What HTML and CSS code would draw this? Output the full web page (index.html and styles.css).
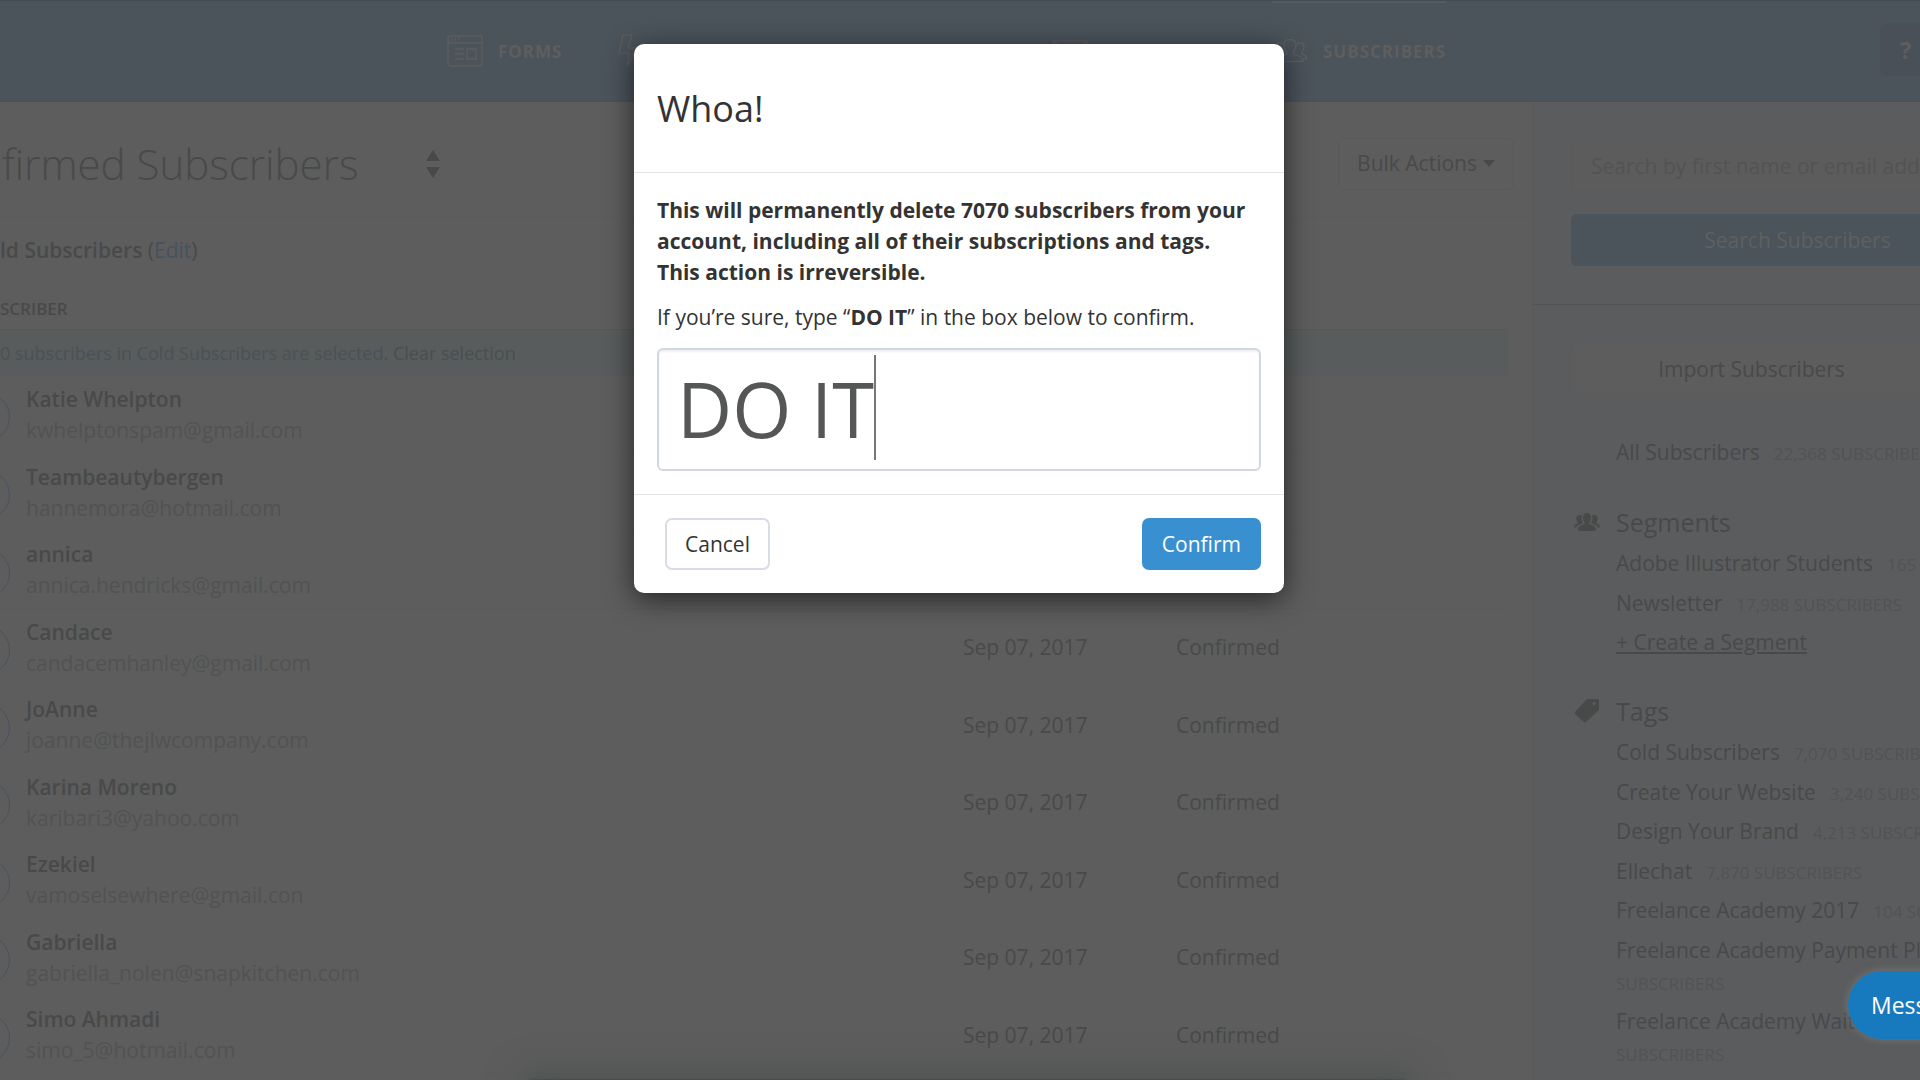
FILE: index.html
```html
<!DOCTYPE html>
<html lang="en">
<head>
    <meta charset="UTF-8">
    <meta name="viewport" content="width=device-width, initial-scale=1.0">
    <title>Confirmed Subscribers</title>
    <link rel="stylesheet" href="styles.css">
</head>
<body>
    <header class="topbar">
        <nav class="nav">
            <a href="#" class="nav-link">
                <svg width="36" height="32" viewBox="0 0 36 32" fill="none" stroke="currentColor" stroke-width="1.3">
                    <rect x="1" y="1" width="34" height="30" rx="2"/>
                    <path d="M1 8h34M8 14h9M8 19h9M8 24h9M20 14h9v10h-9z"/>
                    <path d="M4 4.500h1.500M7.500 4.500h1.500M11 4.500h1.500" stroke-width="2"/>
                </svg>
                <span>FORMS</span>
            </a>
            <a href="#" class="nav-link" aria-label="Automations">
                <svg width="22" height="34" viewBox="0 0 22 34" fill="none" stroke="currentColor" stroke-width="1.2">
                    <path d="M5 1h9l-4 13h9L9 32l2-13H1z"/>
                </svg>
            </a>
            <a href="#" class="nav-link" aria-label="Broadcasts">
                <svg width="36" height="22" viewBox="0 0 36 22" fill="none" stroke="currentColor" stroke-width="1.2">
                    <path d="M1 1h34v20H1zM1 1l17 12L35 1"/>
                </svg>
            </a>
            <a href="#" class="nav-link active">
                <svg width="36" height="24" viewBox="0 0 36 24" fill="none" stroke="currentColor" stroke-width="1.3">
                    <path d="M5 22.500h26c0-3-1-4-3-5l-6-2c-1-1-1-2 0-3 1-2 2-4 2-7 0-3-2-5-6-5s-6 2-6 5c0 3 1 5 2 7 1 1 1 2 0 3l-6 2c-2 1-3 2-3 5z"/>
                    <path d="M25 5c1-2 7-2 7 3 0 2-1 4-2 5v2c1 1 5 1 5 4v1h-4M11 5c-1-2-7-2-7 3 0 2 1 4 2 5v2c-1 1-5 1-5 4v1h4"/>
                </svg>
                <span>SUBSCRIBERS</span>
            </a>
        </nav>
        <button class="help">?</button>
    </header>

    <div class="page">
        <main class="content">
            <div class="title-row">
                <h1>firmed Subscribers</h1>
                <svg class="sort" width="14" height="28" viewBox="0 0 14 28" fill="currentColor"><path d="M7 0l7 11H0zM7 28l7-11H0z"/></svg>
                <button class="bulk">Bulk Actions <svg width="12" height="7" viewBox="0 0 12 7" fill="currentColor"><path d="M0 0h12L6 7z"/></svg></button>
            </div>
            <p class="filter"><b>ld Subscribers</b> (<a href="#">Edit</a>)</p>
            <table class="subscribers">
                <thead>
                    <tr><th>SCRIBER</th><th></th><th></th></tr>
                    <tr class="selected"><td colspan="3">0 subscribers in Cold Subscribers are selected. <a href="#">Clear selection</a></td></tr>
                </thead>
                <tbody>
                    <tr><td class="person"><b>Katie Whelpton</b><span>kwhelptonspam@gmail.com</span></td><td></td><td></td></tr>
                    <tr><td class="person"><b>Teambeautybergen</b><span>hannemora@hotmail.com</span></td><td></td><td></td></tr>
                    <tr><td class="person"><b>annica</b><span>annica.hendricks@gmail.com</span></td><td></td><td></td></tr>
                    <tr><td class="person"><b>Candace</b><span>candacemhanley@gmail.com</span></td><td>Sep 07, 2017</td><td>Confirmed</td></tr>
                    <tr><td class="person"><b>JoAnne</b><span>joanne@thejlwcompany.com</span></td><td>Sep 07, 2017</td><td>Confirmed</td></tr>
                    <tr><td class="person"><b>Karina Moreno</b><span>karibari3@yahoo.com</span></td><td>Sep 07, 2017</td><td>Confirmed</td></tr>
                    <tr><td class="person"><b>Ezekiel</b><span>vamoselsewhere@gmail.con</span></td><td>Sep 07, 2017</td><td>Confirmed</td></tr>
                    <tr><td class="person"><b>Gabriella</b><span>gabriella_nolen@snapkitchen.com</span></td><td>Sep 07, 2017</td><td>Confirmed</td></tr>
                    <tr><td class="person"><b>Simo Ahmadi</b><span>simo_5@hotmail.com</span></td><td>Sep 07, 2017</td><td>Confirmed</td></tr>
                </tbody>
            </table>
        </main>

        <aside class="sidebar">
            <form class="search">
                <input type="text" aria-label="Search subscribers" placeholder="Search by first name or email address">
                <button type="button">Search Subscribers</button>
            </form>
            <div class="lists">
                <button class="import">Import Subscribers</button>
                <ul class="all">
                    <li><a href="#">All Subscribers</a><small>22,368 SUBSCRIBERS</small></li>
                </ul>
                <h2>
                    <svg width="26" height="18" viewBox="0 0 26 18" fill="currentColor">
                        <path d="M13 0c3 0 4 2 4 5 0 2-1 4-2 5 0 2 7 2 7 6 0 1-1 2-2 2H6c-1 0-2-1-2-2 0-4 7-4 7-6-1-1-2-3-2-5 0-3 1-5 4-5z"/>
                        <path d="M6 2c1 0 2 0 2 1-1 4 0 5 1 7-2 2-6 1-7 5-3 0-2-4 2-5-2-3-3-8 2-8zM20 2c-1 0-2 0-2 1 1 4 0 5-1 7 2 2 6 1 7 5 3 0 2-4-2-5 2-3 3-8-2-8z"/>
                    </svg>
                    Segments
                </h2>
                <ul>
                    <li><a href="#">Adobe Illustrator Students</a><small>165 SUBSCRIBERS</small></li>
                    <li><a href="#">Newsletter</a><small>17,988 SUBSCRIBERS</small></li>
                    <li><a href="#" class="create">+ Create a Segment</a></li>
                </ul>
                <h2 class="tags-title">
                    <svg width="26" height="26" viewBox="0 0 26 26" fill="currentColor">
                        <path fill-rule="evenodd" d="M14 1h10q1 0 1 1v9q0 1-1 2L12 24q-1 1-2 0L1 16q-1-1 0-2L12 2q1-1 2-1zM20 4a1.500 1.500 0 1 0 .1 0z"/>
                    </svg>
                    Tags
                </h2>
                <ul>
                    <li><a href="#">Cold Subscribers</a><small>7,070 SUBSCRIBERS</small></li>
                    <li><a href="#">Create Your Website</a><small>3,240 SUBSCRIBERS</small></li>
                    <li><a href="#">Design Your Brand</a><small>4,213 SUBSCRIBERS</small></li>
                    <li><a href="#">Ellechat</a><small>7,870 SUBSCRIBERS</small></li>
                    <li><a href="#">Freelance Academy 2017</a><small>104 SUBSCRIBERS</small></li>
                    <li><a href="#">Freelance Academy Payment Plan</a><br><small>SUBSCRIBERS</small></li>
                    <li><a href="#">Freelance Academy Waitlist</a><br><small>SUBSCRIBERS</small></li>
                </ul>
            </div>
        </aside>
    </div>

    <div class="drawer"></div>
    <button class="messages">Messages</button>

    <div class="overlay">
        <div class="modal" role="dialog" aria-labelledby="modal-title">
            <div class="modal-header">
                <h3 id="modal-title">Whoa!</h3>
            </div>
            <div class="modal-body">
                <p><b>This will permanently delete 7070 subscribers from your account, including all of their subscriptions and tags. This action is irreversible.</b></p>
                <label for="confirm-text">If you’re sure, type “<b>DO IT</b>” in the box below to confirm.</label>
                <div class="confirm-field">
                    <input type="text" id="confirm-text" value="DO IT">
                    <span class="caret"></span>
                </div>
            </div>
            <div class="modal-footer">
                <button class="btn">Cancel</button>
                <button class="btn btn-primary">Confirm</button>
            </div>
        </div>
    </div>
</body>
</html>
```
FILE: styles.css
```css
:root {
    --page: #5d5d5d;
    --bar: #4b535b;
    --side: #5b5c5e;
    --text: #484a49;
    --muted: #515353;
    --line: #5a5b5b;
}
* {
    box-sizing: border-box;
}
body {
    margin: 0;
    height: 100vh;
    overflow: hidden;
    display: flex;
    flex-direction: column;
    background: var(--page);
    color: var(--text);
    font-family: "Open Sans", "Noto Sans", sans-serif;
    font-size: 21px;
    line-height: 31px;
}
button, input {
    font: inherit;
    color: inherit;
}
a {
    color: inherit;
    text-decoration: none;
}
b {
    font-weight: 600;
}
h1, h2, h3, p, ul {
    margin: 0;
    padding: 0;
    font-weight: 400;
}
.topbar {
    flex: none;
    display: flex;
    justify-content: space-between;
    height: 102px;
    background: var(--bar);
    border-top: 1px solid #454c54;
    border-bottom: 1px solid #48525d;
    color: #5e5e5f;
}
.nav {
    display: grid;
    grid-template-columns: 171px 434px 220px auto;
    padding-left: 447px;
}
.nav-link {
    display: flex;
    align-items: center;
    gap: 15px;
    font-size: 17px;
    font-weight: 700;
    letter-spacing: 1px;
}
.nav-link.active {
    box-shadow: inset 0 2px #535b62;
}
.help {
    flex: none;
    width: 64px;
    height: 53px;
    margin: 22px -24px 0 0;
    padding: 0 0 0 20px;
    border: 0;
    border-radius: 8px;
    background: #495057;
    font-size: 24px;
    font-weight: 700;
    text-align: left;
}
.page {
    flex: 1;
    min-height: 0;
    display: flex;
}
.content {
    flex: 1;
    min-width: 0;
}
.title-row {
    display: flex;
    align-items: center;
    height: 115px;
    padding: 9px 18px 0 2px;
    border-bottom: 1px solid var(--line);
}
h1 {
    font-size: 42px;
    font-weight: 300;
    line-height: 50px;
}
.sort {
    margin-left: 67px;
}
.bulk {
    display: flex;
    align-items: center;
    gap: 6px;
    height: 52px;
    margin-left: auto;
    padding: 0 18px;
    background: none;
    border: 1px solid #585a5a;
    border-radius: 6px;
}
.filter {
    height: 68px;
    padding-top: 18px;
}
.filter a {
    color: #46525e;
}
.subscribers {
    width: calc(100% - 24px);
    border-collapse: collapse;
    table-layout: fixed;
}
.subscribers th {
    height: 44px;
    padding: 4px 0 0;
    text-align: left;
    font-size: 17px;
    font-weight: 600;
    line-height: 24px;
}
.subscribers th:nth-child(2) {
    width: 213px;
}
.subscribers th:nth-child(3) {
    width: 332px;
}
.subscribers td {
    padding: 1px 0 0;
}
.subscribers .selected td {
    height: 47px;
    background: #585c5d;
    border-top: 1px solid #585656;
    color: #4b5155;
    font-size: 18px;
    line-height: 30px;
}
.subscribers .selected a {
    color: #494f50;
}
.subscribers tbody tr {
    height: 77px;
    border-bottom: 1px solid #5b5b5b;
}
.subscribers tbody tr:nth-child(even) {
    height: 78px;
}
.person {
    position: relative;
    overflow: hidden;
}
.subscribers .person {
    padding-left: 26px;
}
.person::before {
    content: "";
    position: absolute;
    left: -40px;
    top: 16px;
    width: 48px;
    height: 48px;
    border: 1px solid #465361;
    border-radius: 50%;
}
.person b, .person span {
    display: block;
    position: relative;
}
.person span {
    color: var(--muted);
}
.sidebar {
    flex: none;
    width: 388px;
    overflow: hidden;
    background: var(--side);
    border-left: 1px solid #585959;
}
.search {
    display: grid;
    gap: 22px;
    padding: 38px 0 38px 38px;
    width: 491px;
    border-bottom: 1px solid #525454;
}
.search input {
    height: 52px;
    padding: 0 19px;
    background: #5c5c5c;
    border: 1px solid #595a5a;
}
.search input::placeholder {
    color: #525353;
    opacity: 1;
}
.search button {
    height: 52px;
    border: 0;
    border-radius: 6px;
    background: var(--bar);
    color: #5f6061;
}
.lists {
    width: 491px;
    padding: 38px 0 0 38px;
}
.import {
    width: 361px;
    height: 52px;
    background: #5d5d5d;
    border: 1px solid #5a5b5c;
    border-radius: 6px;
}
.lists ul {
    list-style: none;
    padding-left: 45px;
    line-height: 32px;
}
.lists .all {
    padding-top: 41px;
    padding-bottom: 29px;
}
.lists li {
    margin-bottom: 7px;
    white-space: nowrap;
}
.lists li:nth-child(odd) {
    margin-bottom: 8px;
}
.lists small {
    font-size: 17px;
    line-height: 20px;
    color: #525354;
}
.lists a + small {
    margin-left: 14px;
}
.create {
    text-decoration: underline;
}
h2 {
    display: flex;
    align-items: center;
    gap: 16px;
    margin-bottom: 8px;
    padding-left: 3px;
    font-size: 25px;
    line-height: 34px;
}
.tags-title {
    margin-top: 36px;
}
.drawer {
    position: absolute;
    left: 530px;
    right: 515px;
    top: 100%;
    height: 40px;
    box-shadow: 0 0 2px rgba(40, 45, 42, 0.6), 0 0 34px 10px rgba(60, 72, 66, 0.4);
}
.messages {
    position: absolute;
    left: calc(100% - 72px);
    bottom: 41px;
    height: 68px;
    padding: 0 23px;
    border: 0;
    border-radius: 34px;
    background: #187abe;
    color: #fff;
    font-size: 23px;
    box-shadow: 0 0 8px rgba(150, 150, 150, 0.5);
}
.overlay {
    position: absolute;
    inset: 0;
    display: flex;
    justify-content: center;
    align-items: flex-start;
    padding: 44px 2px 0 0;
}
.modal {
    width: 650px;
    background: #fff;
    color: #333;
    border-radius: 10px;
    box-shadow: 0 6px 28px rgba(0, 0, 0, 0.6);
}
.modal-header {
    padding: 40px 23px 39px;
    border-bottom: 1px solid #e2e4e6;
}
.modal-header h3 {
    font-size: 36px;
    line-height: 49px;
}
.modal-body {
    padding: 22px 23px 23px;
}
.modal-body b {
    font-weight: 700;
}
.modal-body p {
    margin-bottom: 14px;
    padding-right: 8px;
}
.modal-body label {
    display: block;
    margin-bottom: 15px;
}
.confirm-field {
    position: relative;
}
.confirm-field input {
    display: block;
    width: 100%;
    height: 123px;
    padding: 0 18px 3px;
    border: 2px solid #d3d8e0;
    border-radius: 6px;
    box-shadow: inset 0 2px 2px #eef0f3;
    color: #555756;
    font-size: 76px;
}
.caret {
    position: absolute;
    left: 217px;
    top: 7px;
    width: 2px;
    height: 105px;
    background: #777;
}
.modal-footer {
    display: flex;
    justify-content: space-between;
    padding: 23px 23px 23px 31px;
    border-top: 1px solid #e2e4e6;
}
.btn {
    height: 52px;
    padding: 0 18px;
    background: #fff;
    border: 2px solid #d8dce4;
    border-radius: 7px;
}
.btn-primary {
    background: #3890d0;
    border-color: #3890d0;
    color: #fff;
}
```
